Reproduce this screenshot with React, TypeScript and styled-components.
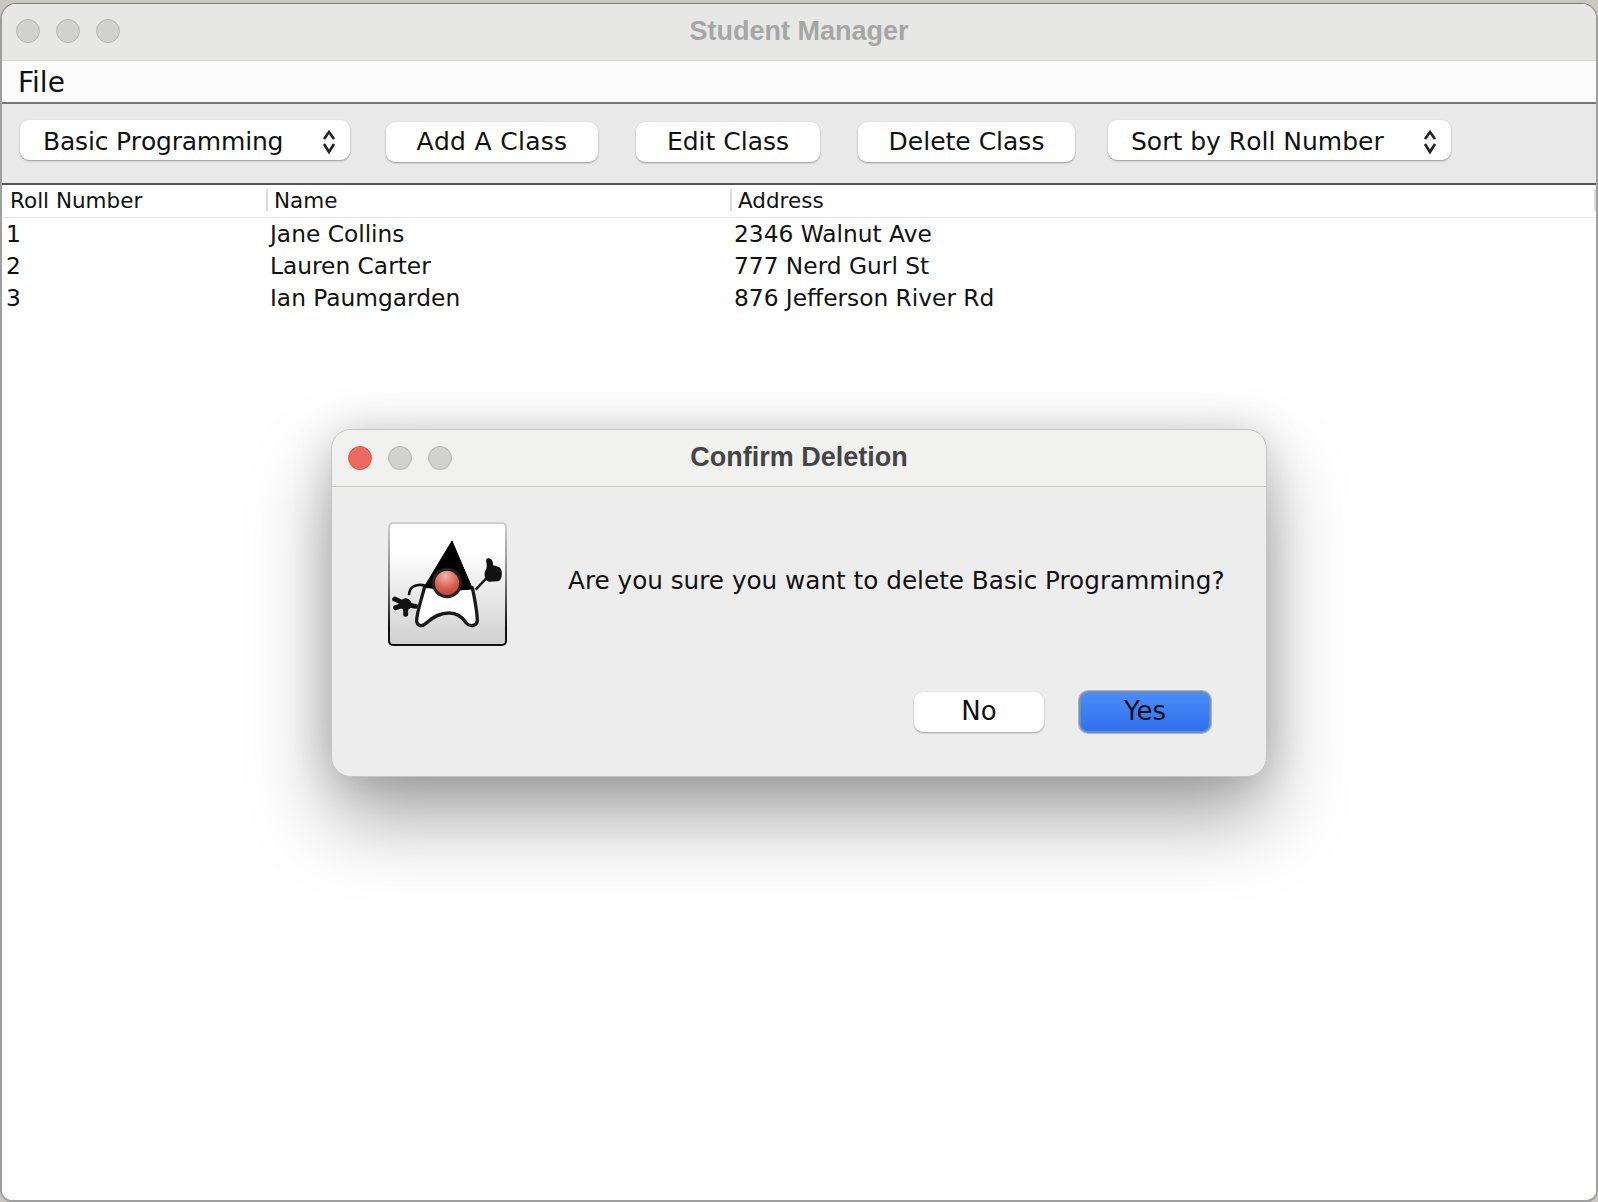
import styled, { createGlobalStyle } from 'styled-components';

const GlobalStyle = createGlobalStyle`
  html, body {
    margin: 0;
    padding: 0;
    background: #c9c7c2;
  }
  * {
    box-sizing: border-box;
  }
`;

const uiFont = `'DejaVu Sans', 'Open Sans', sans-serif`;
const titleFont = `'Liberation Sans', Arial, sans-serif`;

const Screen = styled.div`
  position: relative;
  width: 1598px;
  height: 1202px;
  padding-top: 3px;
  overflow: hidden;
`;

const Window = styled.div`
  height: 100%;
  display: flex;
  flex-direction: column;
  background: #fff;
  border: 2px solid #9f9f9f;
  border-top: 1px solid #7d7d7d;
  border-radius: 16px 16px 12px 12px;
  overflow: hidden;
  font-family: ${uiFont};
`;

const TitleBar = styled.div`
  position: relative;
  flex: 0 0 57px;
  display: flex;
  align-items: center;
  justify-content: center;
  padding-bottom: 2px;
  background: #e7e7e5;
  border-bottom: 1px solid #d8d8d8;
`;

const Lights = styled.div`
  position: absolute;
  left: 14px;
  top: 15px;
  display: flex;
  gap: 16px;
`;

const Light = styled.span<{ $color?: string }>`
  width: 24px;
  height: 24px;
  border-radius: 50%;
  background: ${(props) => props.$color ?? '#d1d1cf'};
  border: 1px solid ${(props) => (props.$color ? '#dc5a50' : '#b5b5b3')};
`;

const Title = styled.div<{ $dim?: boolean }>`
  font-family: ${titleFont};
  font-size: 27px;
  font-weight: bold;
  color: ${(props) => (props.$dim ? '#a6a6a6' : '#454545')};
`;

const MenuBar = styled.div`
  flex: 0 0 43px;
  display: flex;
  align-items: center;
  padding: 1px 0 0 16px;
  background: #fbfbfb;
  border-bottom: 2px solid #777;
  font-size: 28px;
  color: #111;
`;

const Toolbar = styled.div`
  flex: 0 0 81px;
  display: flex;
  align-items: center;
  padding: 0 0 4px 18px;
  background: #e9e9e9;
  border-bottom: 2px solid #555;
`;

const Control = styled.div<{ $width: number; $gap: number; $track?: number }>`
  width: ${(props) => props.$width}px;
  margin-right: ${(props) => props.$gap}px;
  height: 40px;
  display: flex;
  align-items: center;
  justify-content: center;
  background: #fff;
  border-radius: 9px;
  box-shadow: 0 1px 2px rgba(0, 0, 0, 0.35);
  font-size: 25px;
  font-kerning: none;
  letter-spacing: ${(props) => props.$track ?? 0}px;
  color: #111;
`;

const Select = styled(Control)`
  justify-content: space-between;
  margin-bottom: 4px;
  padding: 4px 13px 0 23px;
`;

const Table = styled.div`
  flex: 1;
  background: #fff;
  color: #111;
`;

const Grid = styled.div`
  display: grid;
  grid-template-columns: 264px 464px 1fr;
`;

const HeadRow = styled(Grid)`
  height: 33px;
  align-items: center;
  padding-bottom: 2px;
  border-bottom: 1px solid #e4e4e4;
`;

const HeadCell = styled.div<{ $first?: boolean; $last?: boolean }>`
  height: 22px;
  display: flex;
  align-items: center;
  padding-left: ${(props) => (props.$first ? '8px' : '6px')};
  font-size: 21.5px;
  border-left: ${(props) => (props.$first ? 'none' : '2px solid #dcdcdc')};
  border-right: ${(props) => (props.$last ? '2px solid #dcdcdc' : 'none')};
`;

const Row = styled(Grid)`
  height: 32px;
  align-items: center;
  padding-bottom: 2px;
  font-size: 23.3px;
`;

const Cell = styled.div`
  padding-left: 4px;
  white-space: nowrap;
`;

const Dialog = styled.div`
  position: absolute;
  left: 331px;
  top: 429px;
  width: 936px;
  height: 348px;
  display: flex;
  flex-direction: column;
  background: #ededed;
  border: 1px solid #c4c4c4;
  border-radius: 20px;
  box-shadow: 0 40px 80px rgba(0, 0, 0, 0.36), 0 0 40px rgba(0, 0, 0, 0.14);
  overflow: hidden;
  font-family: ${uiFont};
`;

const DialogTitle = styled.div`
  position: relative;
  flex: 0 0 57px;
  display: flex;
  align-items: center;
  justify-content: center;
  padding-bottom: 2px;
  background: #f1f1ef;
  border-bottom: 1px solid #c6c6c6;
`;

const DialogLights = styled(Lights)`
  top: 16px;
  left: 16px;
`;

const DialogBody = styled.div`
  flex: 1;
  padding: 35px 41px 0 56px;
`;

const MessageRow = styled.div`
  display: flex;
  align-items: center;
  gap: 61px;
`;

const Message = styled.div`
  padding-bottom: 8px;
  font-size: 24.7px;
  color: #111;
  white-space: nowrap;
`;

const Actions = styled.div`
  display: flex;
  justify-content: flex-end;
  align-items: center;
  gap: 35px;
  margin-top: 45px;
  padding-right: 14px;
`;

const DialogButton = styled.div<{ $primary?: boolean }>`
  width: ${(props) => (props.$primary ? '132px' : '130px')};
  height: ${(props) => (props.$primary ? '42px' : '40px')};
  display: flex;
  align-items: center;
  justify-content: center;
  padding-bottom: 2px;
  border-radius: 9px;
  font-size: 26px;
  color: #111;
  background: ${(props) =>
    props.$primary ? 'linear-gradient(#4a8cf7, #3070f0)' : '#fff'};
  border: ${(props) => (props.$primary ? '2px solid #6f8fb8' : 'none')};
  box-shadow: ${(props) =>
    props.$primary ? '0 0 0 1px #a3b3c9' : '0 1px 2px rgba(0, 0, 0, 0.35)'};
`;

const IconFrame = styled.div`
  flex: 0 0 119px;
  height: 124px;
  border-radius: 5px;
  border: 2px solid transparent;
  background: linear-gradient(#fff 22%, #d0d0d0 100%) padding-box,
    linear-gradient(#d0d0d0, #808080 45%, #111 85%) border-box;

  svg {
    display: block;
  }
`;

const Chevrons = () => (
  <svg width="16" height="26" viewBox="0 0 16 26" fill="none" stroke="#222" strokeWidth="2.6">
    <path d="M3 10 L8 3 L13 10" />
    <path d="M3 15 L8 23 L13 15" />
  </svg>
);

const DukeIcon = () => (
  <svg width="115" height="120" viewBox="61 71 345 360">
    <defs>
      <radialGradient id="nose" cx="0.45" cy="0.25" r="0.8">
        <stop offset="0" stopColor="#eeb8ac" />
        <stop offset="0.55" stopColor="#da5f52" />
        <stop offset="1" stopColor="#b83a30" />
      </radialGradient>
    </defs>
    <path
      d="M165 258 C155 300 140 340 141 362 C142 378 158 380 170 368 C195 345 215 338 238 338 C260 338 278 350 290 368 C300 380 322 378 323 360 C322 330 315 295 308 262 Z"
      fill="#fff"
      stroke="#1a1a1a"
      strokeWidth="10"
      strokeLinejoin="round"
    />
    <path d="M247 122 L165 258 C190 268 280 272 308 265 Z" fill="#000" stroke="#000" strokeWidth="3" strokeLinejoin="round" />
    <circle cx="232" cy="248" r="41" fill="url(#nose)" stroke="#222" strokeWidth="9" />
    <path d="M318 268 L352 232" stroke="#111" strokeWidth="7" fill="none" />
    <path
      d="M350 176 C358 170 372 178 370 195 L388 200 C400 205 400 240 385 243 L358 244 C342 240 342 215 350 205 C354 195 348 186 350 176 Z"
      fill="#111"
    />
    <path d="M165 255 C140 250 118 258 118 285" stroke="#111" strokeWidth="8" fill="none" />
    <circle cx="108" cy="312" r="18" fill="#111" />
    <path
      d="M108 312 L75 296 M108 312 L78 322 M108 312 L108 342 M108 312 L138 318"
      stroke="#111"
      strokeWidth="15"
      strokeLinecap="round"
      fill="none"
    />
  </svg>
);

const App = () => (
  <Screen>
    <GlobalStyle />
    <Window>
      <TitleBar>
        <Lights>
          <Light />
          <Light />
          <Light />
        </Lights>
        <Title $dim>Student Manager</Title>
      </TitleBar>
      <MenuBar>File</MenuBar>
      <Toolbar>
        <Select $width={330} $gap={36} $track={-0.2}>
          Basic Programming
          <Chevrons />
        </Select>
        <Control $width={212} $gap={38} $track={0.3}>Add A Class</Control>
        <Control $width={184} $gap={38}>Edit Class</Control>
        <Control $width={217} $gap={33}>Delete Class</Control>
        <Select $width={343} $gap={0}>
          Sort by Roll Number
          <Chevrons />
        </Select>
      </Toolbar>
      <Table>
        <HeadRow>
          <HeadCell $first>Roll Number</HeadCell>
          <HeadCell>Name</HeadCell>
          <HeadCell $last>Address</HeadCell>
        </HeadRow>
        <Row>
          <Cell>1</Cell>
          <Cell>Jane Collins</Cell>
          <Cell>2346 Walnut Ave</Cell>
        </Row>
        <Row>
          <Cell>2</Cell>
          <Cell>Lauren Carter</Cell>
          <Cell>777 Nerd Gurl St</Cell>
        </Row>
        <Row>
          <Cell>3</Cell>
          <Cell>Ian Paumgarden</Cell>
          <Cell>876 Jefferson River Rd</Cell>
        </Row>
      </Table>
    </Window>
    <Dialog>
      <DialogTitle>
        <DialogLights>
          <Light $color="#ee6a5f" />
          <Light />
          <Light />
        </DialogLights>
        <Title>Confirm Deletion</Title>
      </DialogTitle>
      <DialogBody>
        <MessageRow>
          <IconFrame>
            <DukeIcon />
          </IconFrame>
          <Message>Are you sure you want to delete Basic Programming?</Message>
        </MessageRow>
        <Actions>
          <DialogButton>No</DialogButton>
          <DialogButton $primary>Yes</DialogButton>
        </Actions>
      </DialogBody>
    </Dialog>
  </Screen>
);

export default App;
